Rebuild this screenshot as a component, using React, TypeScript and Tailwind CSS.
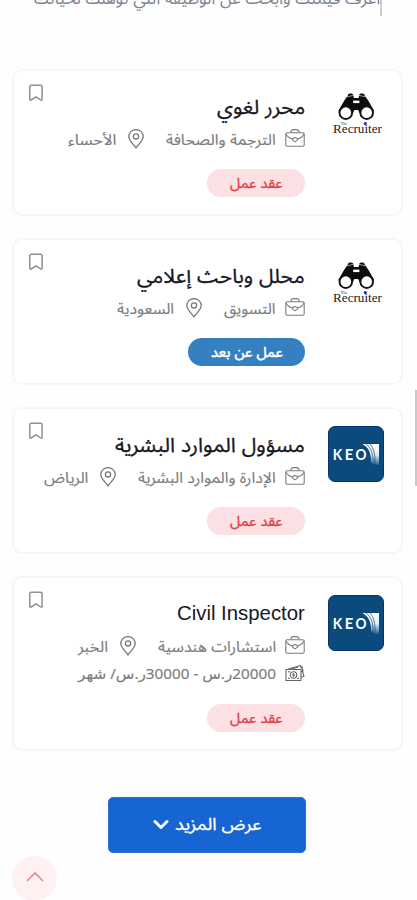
import { useLayoutEffect, useRef, useState } from "react";
import { clsx } from "clsx";

/** One line of text, condensed or widened to the width of its box. */
function FitText({ children, className }: { children: string; className?: string }) {
  const box = useRef<HTMLSpanElement>(null);
  const line = useRef<HTMLSpanElement>(null);
  const [scale, setScale] = useState(1);

  useLayoutEffect(() => {
    if (box.current && line.current && line.current.offsetWidth > 0) {
      setScale(box.current.clientWidth / line.current.offsetWidth);
    }
  }, [children]);

  return (
    <span ref={box} className={clsx("flex shrink-0 justify-start whitespace-nowrap", className)}>
      <span ref={line} className="shrink-0 origin-right" style={{ transform: `scaleX(${scale})` }}>
        {children}
      </span>
    </span>
  );
}

function BookmarkIcon() {
  return (
    <svg viewBox="0 0 16 18" className="h-[18px] w-4" fill="none" stroke="#8d9096" strokeWidth="1.5" strokeLinejoin="round">
      <path d="M3.4 1.2h9c1 0 1.700.6 1.700 1.500v12.800c0 .7-.8.9-1.300.5L8 12.800 3.100 16c-.5.4-1.300.2-1.300-.5V2.700c0-.9.7-1.500 1.600-1.500Z" />
    </svg>
  );
}

function BriefcaseIcon() {
  return (
    <svg viewBox="0 0 20 20" className="h-5 w-5 shrink-0" fill="none" stroke="#7c7c7c" strokeWidth="1.1" strokeLinejoin="round">
      <rect x="0.8" y="3.800" width="18.4" height="13.4" rx="1.4" />
      <path d="M5.8 3.600C5.8 1.500 6.900.6 8.400.6h3.200c1.5 0 2.600.9 2.600 3" />
      <path d="M1 5c1.200 2.400 3.600 4.300 6.400 5M19 5c-1.200 2.400-3.600 4.300-6.400 5" />
      <path d="M7.400 9.600 10 8.400l2.600 1.200-.4 1.800L10 12.900l-2.200-1.500Z" />
    </svg>
  );
}

function PinIcon() {
  return (
    <svg viewBox="0 0 16 20" className="h-5 w-4 shrink-0" fill="none" stroke="#777" strokeWidth="1.3">
      <path d="M8 18.800C5.600 15.600 0.800 11.600 0.800 7.600a7.200 7 0 0 1 14.400 0C15.200 11.600 10.400 15.600 8 18.800Z" />
      <circle cx="8" cy="7.400" r="2.600" />
    </svg>
  );
}

function MoneyIcon() {
  return (
    <svg viewBox="0 0 20 18" className="-mt-[3px] h-[18px] w-5 shrink-0" fill="none" stroke="#666" strokeWidth="1.1" strokeLinejoin="round">
      <path d="M1 5.500h15v11H1Z" />
      <path d="m2.500 5.300 13-3.800 1 3M16 7.500l2-.4-1-4.800M16 13.500l3-1.500-2-6" />
      <circle cx="8.500" cy="11" r="3.200" />
      <path d="M3 8c1 0 1.500-.5 1.500-1M3 14c1 0 1.500.5 1.500 1M12.500 15c0-.6.600-1 1.500-1M8.500 9.300v3.400M7.300 10.200h2.400M7.300 11.800h2.400M5 5.500l8-2.200" />
    </svg>
  );
}

function RecruiterLogo() {
  return (
    <svg viewBox="0 0 56 56" direction="ltr" className="h-14 w-14 shrink-0">
      <path
        d="M19.800 7.500c.2-2.600 5.400-2.600 5.600 0l.5 2.500h4.700l.5-2.500c.2-2.600 5.400-2.600 5.600 0l3.500 5 6 10.500-4 3-7-4-3.500 3.500-1.500-3.500h-3.900l-1.500 3.500-3.500-3.500-7 4-4-3 6-10.500Z"
        fill="#0c0c0c"
      />
      <path d="M25.200 12.600h6.200v2.500h-6.200Z" fill="#fff" />
      <path d="m19 8.800 6.500-1.400M37.500 8.800 31 7.400" stroke="#fff" strokeWidth="0.600" />
      <circle cx="17.800" cy="24.700" r="6.300" fill="#fff" stroke="#111" strokeWidth="1.900" />
      <circle cx="38.700" cy="24.700" r="6.300" fill="#fff" stroke="#111" strokeWidth="1.900" />
      <text x="12.500" y="36.500" fontSize="4.500" fontFamily="Liberation Serif, serif" fill="#333">The</text>
      <text x="5" y="45" fontSize="13" fontFamily="Liberation Serif, serif" fill="#222" textLength="49" lengthAdjust="spacingAndGlyphs">
        Recruiter
      </text>
      <circle cx="37.300" cy="35.600" r="1.600" fill="#2c2bb5" />
    </svg>
  );
}

function KeoLogo() {
  return (
    <svg viewBox="0 0 56 56" direction="ltr" className="h-14 w-14 shrink-0">
      <defs>
        <linearGradient id="keo-fade" x1="0" y1="0" x2="0" y2="1">
          <stop offset="0" stopColor="#fff" />
          <stop offset="0.500" stopColor="#e4ecf3" />
          <stop offset="1" stopColor="#fff" stopOpacity="0.100" />
        </linearGradient>
      </defs>
      <rect x="0.500" y="0.500" width="55" height="55" rx="6.500" fill="#0b4a7d" stroke="#0a3173" />
      <g fontSize="15" fontWeight="700" fontFamily="Lato, sans-serif" fill="#fff">
        <text x="4.800" y="34" textLength="9.500" lengthAdjust="spacingAndGlyphs">K</text>
        <text x="16.800" y="34" textLength="8.500" lengthAdjust="spacingAndGlyphs">E</text>
        <text x="27.600" y="34" textLength="11" lengthAdjust="spacingAndGlyphs">O</text>
      </g>
      <path d="M34.500 18H51v21h-2.500l-3-1-2.500-2c.4-9-2.500-14.500-8.500-18Z" fill="url(#keo-fade)" />
      <path d="M38 18c5 4 7.200 9 7 19M42 18c4 5 5.300 10 5 20" stroke="#0b4a7d" strokeWidth="0.700" fill="none" />
    </svg>
  );
}

type Job = {
  title: string;
  titleClass: string;
  field: string;
  fieldClass: string;
  city: string;
  cityClass: string;
  salary?: string;
  remote?: boolean;
  logo: "recruiter" | "keo";
};

const jobs: Job[] = [
  {
    title: "محرر لغوي",
    titleClass: "w-[88px] text-[20px]",
    field: "الترجمة والصحافة",
    fieldClass: "w-[110px]",
    city: "الأحساء",
    cityClass: "w-[48px]",
    logo: "recruiter",
  },
  {
    title: "محلل وباحث إعلامي",
    titleClass: "w-[168px] text-[20px]",
    field: "التسويق",
    fieldClass: "w-[52px]",
    city: "السعودية",
    cityClass: "w-[57px]",
    remote: true,
    logo: "recruiter",
  },
  {
    title: "مسؤول الموارد البشرية",
    titleClass: "w-[190px] text-[20px]",
    field: "الإدارة والموارد البشرية",
    fieldClass: "w-[138px]",
    city: "الرياض",
    cityClass: "w-[44px]",
    logo: "keo",
  },
  {
    title: "Civil Inspector",
    titleClass: "w-[128px] text-[21px] -mt-[2px] [-webkit-text-stroke:0]",
    field: "استشارات هندسية",
    fieldClass: "w-[118px]",
    city: "الخبر",
    cityClass: "w-[30px]",
    salary: "20000ر.س - 30000ر.س/ شهر",
    logo: "keo",
  },
];

function JobCard({ job }: { job: Job }) {
  return (
    <article
      className={clsx(
        "relative flex gap-[23px] rounded-[10px] border-2 border-[#f6f6f7] bg-white pr-[17px] pt-[17px]",
        job.salary ? "h-[175px]" : "h-[147px]",
      )}
    >
      {job.logo === "keo" ? <KeoLogo /> : <RecruiterLogo />}
      <div className="flex flex-col items-start pt-1">
        <h2 className="flex h-8 items-center pb-[2px] leading-7 text-[#17171f] [-webkit-text-stroke:0.3px]">
          <FitText className={job.titleClass}>{job.title}</FitText>
        </h2>
        <div className="flex h-[30px] items-center text-[15px] leading-5 text-[#7c7c7c] [-webkit-text-stroke:0.15px]">
          <BriefcaseIcon />
          <FitText className={clsx("mr-[9px] mt-0.5", job.fieldClass)}>{job.field}</FitText>
          <span className="mr-[22px] flex">
            <PinIcon />
          </span>
          <FitText className={clsx("mr-3 mt-0.5", job.cityClass)}>{job.city}</FitText>
        </div>
        {job.salary && (
          <div className="-mt-px flex h-[29px] items-center font-['Noto_Sans','DejaVu_Sans',sans-serif] text-[15px] leading-5 text-[#7c7c7c] [-webkit-text-stroke:0.15px]">
            <MoneyIcon />
            <FitText className="-mt-[3px] mr-[9px] w-[198px]">{job.salary}</FitText>
          </div>
        )}
        <span
          className={clsx(
            "mt-[15px] flex h-7 items-center justify-center rounded-full text-[14px] leading-5",
            job.remote
              ? "w-[117px] bg-[#3480c0] text-white [-webkit-text-stroke:0.5px]"
              : "w-[98px] bg-[#fbe1e3] text-[#e23b46] [-webkit-text-stroke:0.3px]",
          )}
        >
          <FitText className={job.remote ? "w-[72px]" : "w-[53px]"}>{job.remote ? "عمل عن بعد" : "عقد عمل"}</FitText>
        </span>
      </div>
      <button className="absolute left-[14px] top-[13px]" aria-label="حفظ">
        <BookmarkIcon />
      </button>
    </article>
  );
}

export default function App() {
  return (
    <main
      dir="rtl"
      className="relative h-[900px] w-[417px] overflow-hidden bg-[#fefefe] font-['Liberation_Sans','Noto_Sans_Arabic','DejaVu_Sans',sans-serif]"
    >
      <header className="flex h-[69px] items-start pr-[35px]">
        <span className="h-4 w-[2px] bg-[#c9ced9]" />
        <p className="-mt-[14px] text-[17px] leading-[26px] text-[#7d8593]">
          <FitText className="w-[346px]">اعرف قيمتك وابحث عن الوظيفة التي تؤهلك لحياتك</FitText>
        </p>
      </header>
      <section className="mr-[14px] flex w-[391px] flex-col gap-[22px]">
        {jobs.map((job) => (
          <JobCard key={job.title} job={job} />
        ))}
      </section>
      <div className="mr-[111px] mt-[46px] flex">
        <button className="flex h-[56px] w-[198px] items-center justify-center gap-[6px] rounded-[5px] border border-[#2a6fd6] bg-[#1765d3] text-[17px] text-white [-webkit-text-stroke:0.3px]">
          <FitText className="w-[86px]">عرض المزيد</FitText>
          <svg viewBox="0 0 16 12" className="h-3 w-4" fill="none" stroke="#fff" strokeWidth="3" strokeLinecap="round" strokeLinejoin="round">
            <path d="m2 2.500 6 6 6-6" />
          </svg>
        </button>
      </div>
      <button className="absolute left-[12px] top-[856px] flex h-[45px] w-[45px] items-center justify-center rounded-full bg-[#fff1f1]" aria-label="أعلى">
        <svg viewBox="0 0 18 12" className="mb-[3px] h-3 w-[18px]" fill="none" stroke="#e58a8e" strokeWidth="1.600">
          <path d="m1 10 8-8 8 8" />
        </svg>
      </button>
      <span className="absolute right-0 top-[390px] h-[96px] w-[2px] bg-[#c9c9c9]" />
    </main>
  );
}
